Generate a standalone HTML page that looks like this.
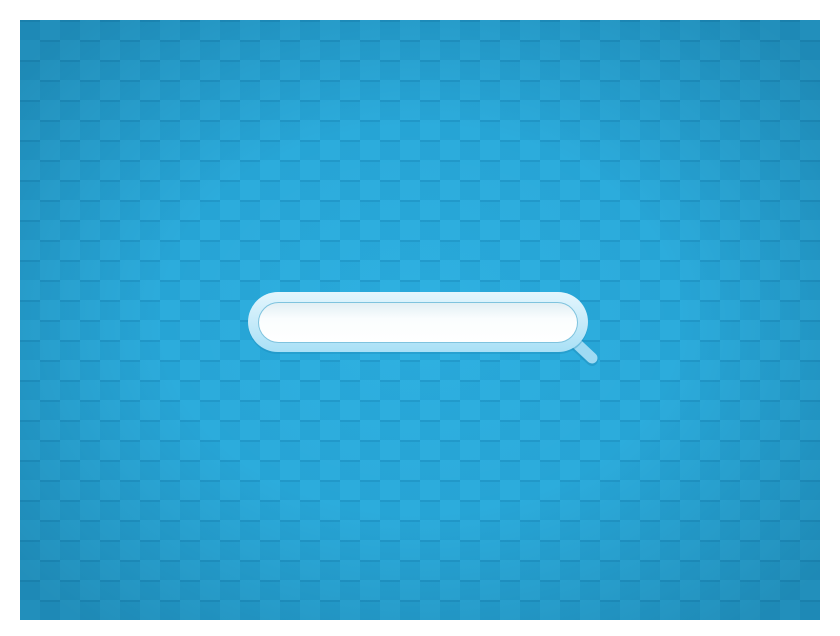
<!DOCTYPE html>
<html><head><style>
html,body{margin:0;padding:0;background:#fff;width:840px;height:636px;overflow:hidden}
#bg{position:absolute;left:20px;top:20px;width:800px;height:600px}
</style></head><body>
<svg id="bg" width="800" height="600" viewBox="0 0 800 600">
<defs>
<pattern id="p" width="40" height="40" patternUnits="userSpaceOnUse">
<rect width="40" height="40" fill="#2eb1e2"/>
<rect x="0" y="0" width="20" height="20" fill="#28a9db"/>
<rect x="20" y="20" width="20" height="20" fill="#28a9db"/>
<rect x="0" y="0" width="20" height="2" fill="#1a8dc0" opacity=".45"/>
<rect x="20" y="20" width="20" height="2" fill="#1a8dc0" opacity=".45"/>
</pattern>
<radialGradient id="v" cx="0.5" cy="0.5" r="0.65">
<stop offset="0" stop-color="#000" stop-opacity="0"/>
<stop offset="0.5" stop-color="#002a45" stop-opacity="0.04"/>
<stop offset="1" stop-color="#002a45" stop-opacity="0.25"/>
</radialGradient>
<linearGradient id="ring" x1="0" y1="0" x2="0" y2="1">
<stop offset="0" stop-color="#e4f6fd"/><stop offset="1" stop-color="#a9e0f6"/>
</linearGradient>
<linearGradient id="in" x1="0" y1="0" x2="0" y2="1">
<stop offset="0" stop-color="#e2eff4"/><stop offset="0.4" stop-color="#fafdfe"/><stop offset="1" stop-color="#ffffff"/>
</linearGradient>
</defs>
<rect width="800" height="600" fill="url(#p)"/>
<rect width="800" height="600" fill="url(#v)"/>
<g transform="translate(-20,-20)">
<line x1="576" y1="343" x2="592" y2="358" stroke="#1a86b5" stroke-width="12" stroke-linecap="round" opacity=".4" transform="translate(0,2)"/>
<line x1="576" y1="343" x2="592" y2="358" stroke="#9fdaf3" stroke-width="11" stroke-linecap="round"/>
<rect x="248" y="294" width="340" height="60" rx="30" fill="#1a86b5" opacity=".35"/>
<rect x="248" y="292" width="340" height="60" rx="30" fill="url(#ring)"/>
<rect x="258" y="302" width="320" height="41" rx="20.5" fill="#7fc3de"/>
<rect x="259" y="303" width="318" height="39" rx="19.5" fill="url(#in)"/>
</g>
</svg>
</body></html>
